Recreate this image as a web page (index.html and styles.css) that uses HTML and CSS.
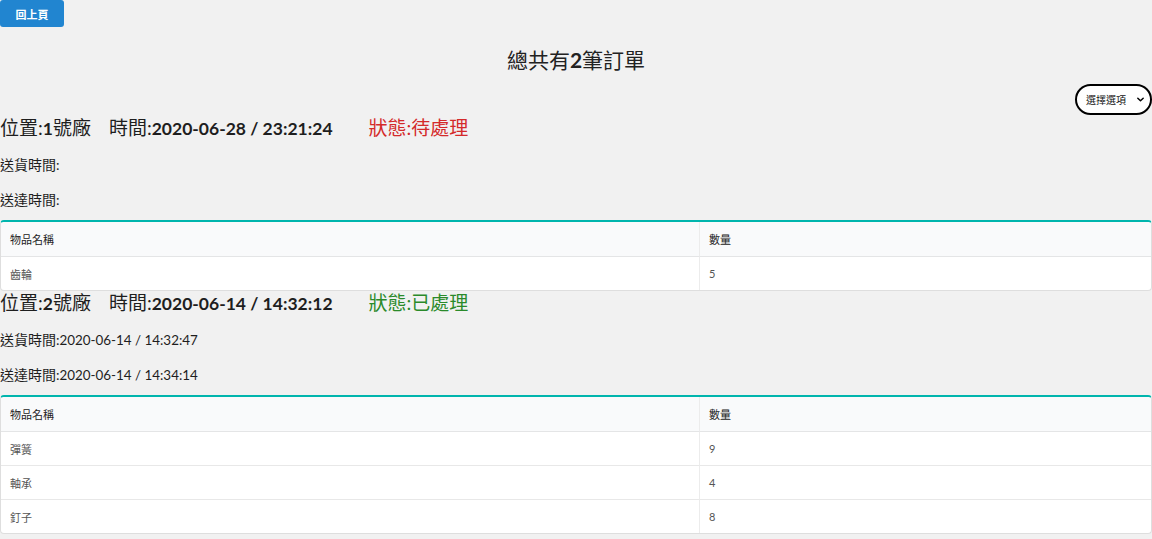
FILE: index.html
```html
<!DOCTYPE html>
<html lang="zh-Hant">
<head>
<meta charset="utf-8">
<title>訂單</title>
<link rel="stylesheet" href="styles.css">
</head>
<body>
<div class="page">
  <div class="topbar">
    <button class="back-btn">回上頁</button>
  </div>
  <h2 class="title">總共有<b>2</b>筆訂單</h2>
  <div class="filter-row">
    <div class="select">
      <span>選擇選項</span>
      <svg class="chev" viewBox="0 0 10 10" width="9" height="9"><path d="M2 3.5 L5 6.5 L8 3.5" fill="none" stroke="#000" stroke-width="1.6" stroke-linecap="round" stroke-linejoin="round"/></svg>
    </div>
  </div>

  <section class="order">
    <div class="order-head">
      <span class="loc">位置:<b>1</b>號廠</span>
      <span class="time">時間:<b>2020-06-28 / 23:21:24</b></span>
      <span class="status pending">狀態:待處理</span>
    </div>
    <p class="meta">送貨時間:</p>
    <p class="meta">送達時間:</p>
    <table class="items">
      <thead><tr><th class="col-name">物品名稱</th><th>數量</th></tr></thead>
      <tbody>
        <tr><td>齒輪</td><td>5</td></tr>
      </tbody>
    </table>
  </section>

  <section class="order">
    <div class="order-head">
      <span class="loc">位置:<b>2</b>號廠</span>
      <span class="time">時間:<b>2020-06-14 / 14:32:12</b></span>
      <span class="status done">狀態:已處理</span>
    </div>
    <p class="meta">送貨時間:<span class="val">2020-06-14 / 14:32:47</span></p>
    <p class="meta">送達時間:<span class="val">2020-06-14 / 14:34:14</span></p>
    <table class="items">
      <thead><tr><th class="col-name">物品名稱</th><th>數量</th></tr></thead>
      <tbody>
        <tr><td>彈簧</td><td>9</td></tr>
        <tr><td>軸承</td><td>4</td></tr>
        <tr><td>釘子</td><td>8</td></tr>
      </tbody>
    </table>
  </section>
</div>
</body>
</html>
```

FILE: styles.css
```css
html, body {
  margin: 0;
  padding: 0;
  background: #f1f1f1;
}
body {
  font-family: Lato, "Noto Sans CJK TC", sans-serif;
  color: #1e1e1e;
}
.page {
  width: 1152px;
}
.topbar {
  height: 27px;
}
.back-btn {
  display: block;
  width: 64px;
  height: 27px;
  margin: 0;
  padding: 0;
  border: none;
  border-radius: 3px;
  background: #2185d0;
  color: #fff;
  font-family: Lato, "Noto Sans CJK TC", sans-serif;
  font-size: 11px;
  font-weight: 700;
}
.title {
  margin: 20px 0 0;
  height: 26px;
  line-height: 26px;
  text-align: center;
  font-size: 21px;
  font-weight: 400;
  color: #222;
}
.filter-row {
  display: flex;
  justify-content: flex-end;
  margin-top: 11px;
}
.select {
  box-sizing: border-box;
  width: 77px;
  height: 31px;
  border: 2px solid #000;
  border-radius: 16px;
  background: #fff;
  display: flex;
  align-items: center;
  justify-content: space-between;
  padding: 0 5px 0 9px;
  font-size: 10px;
  color: #111;
}
.chev {
  display: block;
}
.order-head {
  display: flex;
  align-items: baseline;
  height: 24px;
  line-height: 24px;
  font-size: 19px;
  color: #1e1e1e;
}
.order-head b {
  font-weight: 700;
  font-size: 17.5px;
}
.time {
  margin-left: 18px;
}
.status {
  margin-left: 36px;
}
.pending {
  color: #d42a2a;
}
.done {
  color: #2a8a2a;
}
.order:first-of-type .order-head {
  margin-top: 1px;
}
.meta {
  margin: 15px 0 0;
  height: 20px;
  line-height: 20px;
  font-size: 14px;
  color: #1e1e1e;
}
.meta .val {
  font-size: 13.4px;
}
.items {
  box-sizing: border-box;
  width: 1152px;
  margin-top: 10px;
  border-collapse: separate;
  border-spacing: 0;
  background: #fff;
  border: 1px solid #dedede;
  border-top: 2px solid #00b5ad;
  border-radius: 4px;
  font-size: 11px;
}
.items th,
.items td {
  text-align: left;
  padding: 0 9px;
  height: 33px;
}
.items th {
  height: 34px;
  background: #f9fafb;
  font-weight: 400;
  color: #222;
  border-bottom: 1px solid #e4e5e6;
}
.items th + th,
.items td + td {
  border-left: 1px solid #ececec;
}
.items td {
  color: #555;
  border-top: 1px solid #e8e8e8;
}
.items tbody tr:first-child td {
  border-top: none;
}
.col-name {
  width: 680px;
}
.items thead th:first-child { border-top-left-radius: 4px; }
.items thead th:last-child { border-top-right-radius: 4px; }
```
